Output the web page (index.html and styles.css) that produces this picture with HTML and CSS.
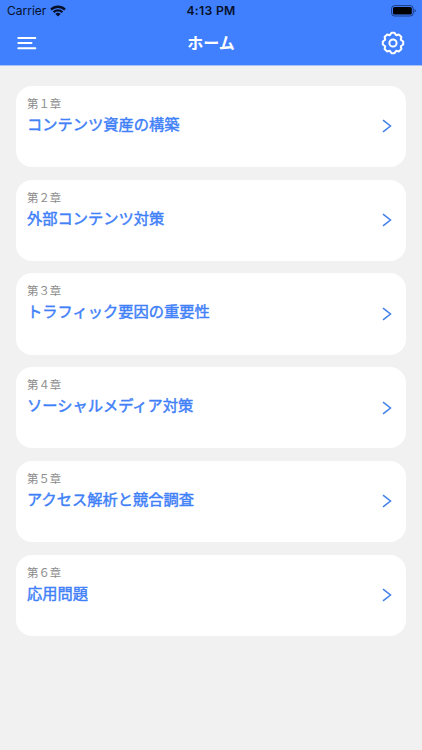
FILE: index.html
```html
<!DOCTYPE html>
<html lang="ja">
<head>
<meta charset="utf-8">
<title>ホーム</title>
<link rel="stylesheet" href="styles.css">
</head>
<body>
<header class="header">
  <div class="status">
    <div class="status-left"><span class="carrier">Carrier</span>
      <svg class="wifi" viewBox="0 0 16 12"><g fill="none" stroke="#06102a" stroke-width="2.3"><path d="M1 4.6A10 10 0 0 1 15 4.6"/><path d="M3.6 7.3A6.2 6.2 0 0 1 12.4 7.3"/></g><path d="M5.4 9A3.8 3.8 0 0 1 10.6 9L8 11.6Z" fill="#06102a"/></svg>
    </div>
    <span class="time">4:13 PM</span>
    <div class="status-right"><svg class="battery" viewBox="0 0 26 12"><rect x=".6" y=".6" width="21.6" height="10.4" rx="3" fill="none" stroke="#1b3a80"/><rect x="2" y="2" width="18.8" height="7.6" rx="1.6" fill="#000"/><path d="M23.5 4.2q1.3.4 1.3 1.6t-1.3 1.6z" fill="#1b3a80"/></svg></div>
  </div>
  <nav class="nav">
    <svg class="menu" viewBox="0 0 20 14"><path d="M1.3 2h17M1.3 7h13.2M1.3 12.2h17" stroke="#fff" stroke-width="2" stroke-linecap="round"/></svg>
    <h1 class="heading">ホーム</h1>
    <svg class="gear" viewBox="-12 -12 24 24"><g fill="none" stroke="#fff" stroke-width="2"><circle r="3.6"/><path stroke-linejoin="round" d="M-1.5-10.2H1.5L3.2-7.8 6-8.4 8.4-6 7.8-3.2 10.2-1.5V1.5L7.8 3.2 8.4 6 6 8.4 3.2 7.8 1.5 10.2H-1.5L-3.2 7.8-6 8.4-8.4 6-7.8 3.2-10.2 1.5V-1.5L-7.8-3.2-8.4-6-6-8.4-3.2-7.8Z"/></g></svg>
  </nav>
</header>
<main class="chapters">
  <a class="card"><div><p class="number">第１章</p><h2 class="title">コンテンツ資産の構築</h2></div><svg class="chevron" viewBox="0 0 10 14"><path d="M1 1.2 8.5 7 1 12.8"/></svg></a>
  <a class="card"><div><p class="number">第２章</p><h2 class="title">外部コンテンツ対策</h2></div><svg class="chevron" viewBox="0 0 10 14"><path d="M1 1.2 8.5 7 1 12.8"/></svg></a>
  <a class="card"><div><p class="number">第３章</p><h2 class="title">トラフィック要因の重要性</h2></div><svg class="chevron" viewBox="0 0 10 14"><path d="M1 1.2 8.5 7 1 12.8"/></svg></a>
  <a class="card"><div><p class="number">第４章</p><h2 class="title">ソーシャルメディア対策</h2></div><svg class="chevron" viewBox="0 0 10 14"><path d="M1 1.2 8.5 7 1 12.8"/></svg></a>
  <a class="card"><div><p class="number">第５章</p><h2 class="title">アクセス解析と競合調査</h2></div><svg class="chevron" viewBox="0 0 10 14"><path d="M1 1.2 8.5 7 1 12.8"/></svg></a>
  <a class="card"><div><p class="number">第６章</p><h2 class="title">応用問題</h2></div><svg class="chevron" viewBox="0 0 10 14"><path d="M1 1.2 8.5 7 1 12.8"/></svg></a>
</main>
</body>
</html>
```
FILE: styles.css
```css
* { box-sizing: border-box; margin: 0; }
body { height: 750px; overflow: hidden; background: #f1f1f1; font-family: Inter, "Noto Sans CJK JP", sans-serif; }
svg { display: block; flex: none; }
.header { height: 66px; background: #4080ff; border-bottom: 1px solid #a9c3f5; }
.status { height: 22px; padding: 0 7px; display: grid; grid-template-columns: 1fr auto 1fr; align-items: center; color: #06102a; font-size: 12px; line-height: 22px; }
.status-left { display: flex; align-items: center; gap: 4px; }
.carrier { font-size: 12px; }
.time { font-weight: 600; font-size: 12.2px; letter-spacing: .3px; }
.status-right { display: flex; justify-content: flex-end; }
.wifi { width: 16px; height: 12px; }
.battery { width: 26px; height: 12px; margin-right: -2px; }
.nav { height: 41px; padding: 0 17px; display: grid; grid-template-columns: 1fr auto 1fr; align-items: center; }
.menu { width: 20px; height: 14px; }
.heading { color: #fff; font-size: 16px; font-weight: 700; line-height: 24px; }
.gear { width: 24px; height: 24px; justify-self: end; }
.chapters { padding: 19.75px 16.5px 20px 16.4px; display: flex; flex-direction: column; gap: 12.5px; }
.card { height: 81.25px; border-radius: 16px; background: #fff; padding: 10px 14px 0 10.6px; display: flex; justify-content: space-between; }
.number { color: #8c8c8c; font-size: 11.4px; line-height: 16px; }
.title { margin-top: 1px; color: #4080f8; font-size: 15.25px; line-height: 24px; font-weight: 400; -webkit-text-stroke: .45px #4080f8; }
.chevron { width: 10px; height: 14px; margin-top: 23.5px; fill: none; stroke: #4080e8; stroke-width: 1.5; }
```
